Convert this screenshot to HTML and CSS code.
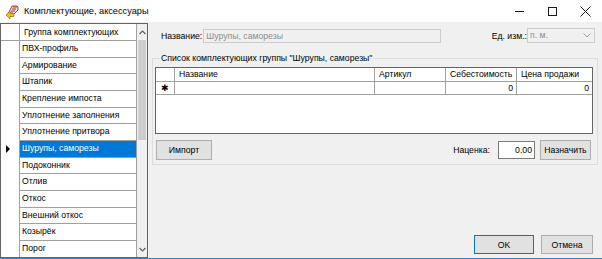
FILE: index.html
```html
<!DOCTYPE html>
<html lang="ru">
<head>
    <meta charset="UTF-8">
    <title>Комплектующие, аксессуары</title>
    <link rel="stylesheet" href="styles.css">
</head>
<body>
<div class="window">
    <div class="titlebar">
        <svg class="app-icon" width="14" height="14" viewBox="0 0 14 14">
            <path d="M7 1 L12 1 L13 2 L13 5 L6 12 L3 9 Z" fill="#e8e8e8" stroke="#7a1a1a" stroke-width="0.8"/>
            <path d="M8 2 L12 2 M7 4 L11 4 M6 6 L10 6 M5 8 L8 8" stroke="#d32020" stroke-width="1.2"/>
            <path d="M1 10 L5 6 L5 8.5 L9 8.5 L9 11.5 L5 11.5 L5 14 Z" fill="#f2c21a" stroke="#8a6a00" stroke-width="0.6"/>
        </svg>
        <span class="caption">Комплектующие, аксессуары</span>
        <div class="controls">
            <span class="ctl"><span class="ctl-min"></span></span>
            <span class="ctl"><span class="ctl-max"></span></span>
            <span class="ctl">
                <svg width="11" height="11" viewBox="0 0 11 11"><path d="M0.5 0.5 L10.5 10.5 M10.5 0.5 L0.5 10.5" stroke="#1a1a1a" stroke-width="1"/></svg>
            </span>
        </div>
    </div>

    <div class="client">
        <!-- группы комплектующих -->
        <div class="groups">
            <div class="groups-table">
                <div class="g-head"><span class="rh"></span><span class="g-cell">Группа комплектующих</span></div>
                <div class="g-row"><span class="rh"></span><span class="g-cell">ПВХ-профиль</span></div>
                <div class="g-row"><span class="rh"></span><span class="g-cell">Армирование</span></div>
                <div class="g-row"><span class="rh"></span><span class="g-cell">Штапик</span></div>
                <div class="g-row"><span class="rh"></span><span class="g-cell">Крепление импоста</span></div>
                <div class="g-row"><span class="rh"></span><span class="g-cell">Уплотнение заполнения</span></div>
                <div class="g-row"><span class="rh"></span><span class="g-cell">Уплотнение притвора</span></div>
                <div class="g-row current"><span class="rh"><i class="arrow"></i></span><span class="g-cell">Шурупы, саморезы</span></div>
                <div class="g-row"><span class="rh"></span><span class="g-cell">Подоконник</span></div>
                <div class="g-row"><span class="rh"></span><span class="g-cell">Отлив</span></div>
                <div class="g-row"><span class="rh"></span><span class="g-cell">Откос</span></div>
                <div class="g-row"><span class="rh"></span><span class="g-cell">Внешний откос</span></div>
                <div class="g-row"><span class="rh"></span><span class="g-cell">Козырёк</span></div>
                <div class="g-row"><span class="rh"></span><span class="g-cell">Порог</span></div>
            </div>
            <div class="vscroll">
                <span class="sb-btn">
                    <svg width="7" height="5" viewBox="0 0 7 5"><path d="M0.5 4 L3.5 1 L6.5 4" fill="none" stroke="#606060" stroke-width="1.2"/></svg>
                </span>
                <span class="sb-thumb"></span>
                <span class="sb-track"></span>
                <span class="sb-btn">
                    <svg width="7" height="5" viewBox="0 0 7 5"><path d="M0.5 1 L3.5 4 L6.5 1" fill="none" stroke="#606060" stroke-width="1.2"/></svg>
                </span>
            </div>
        </div>

        <!-- редактор группы -->
        <div class="editor">
            <div class="props">
                <label class="lbl">Название:</label>
                <span class="textbox disabled name-box">Шурупы, саморезы</span>
                <span class="spacer"></span>
                <label class="lbl">Ед. изм.:</label>
                <span class="combo disabled">п. м.
                    <svg class="combo-arrow" width="8" height="5" viewBox="0 0 8 5"><path d="M0.5 0.5 L4 4 L7.5 0.5" fill="none" stroke="#a0a0a0" stroke-width="1"/></svg>
                </span>
            </div>

            <fieldset class="items">
                <legend>Список комплектующих группы "Шурупы, саморезы"</legend>
                <div class="items-grid">
                    <div class="ig-row ig-head">
                        <span class="ig-rh"></span>
                        <span class="ig-cell">Название</span>
                        <span class="ig-cell">Артикул</span>
                        <span class="ig-cell">Себестоимость</span>
                        <span class="ig-cell">Цена продажи</span>
                    </div>
                    <div class="ig-row">
                        <span class="ig-rh">✱</span>
                        <span class="ig-cell"></span>
                        <span class="ig-cell"></span>
                        <span class="ig-cell num">0</span>
                        <span class="ig-cell num">0</span>
                    </div>
                </div>
                <div class="items-tools">
                    <button class="btn btn-import">Импорт</button>
                    <span class="spacer"></span>
                    <label class="lbl">Наценка:</label>
                    <span class="textbox markup-box">0.00</span>
                    <button class="btn btn-assign">Назначить</button>
                </div>
            </fieldset>

            <div class="dialog-buttons">
                <button class="btn btn-ok">OK</button>
                <button class="btn btn-cancel">Отмена</button>
            </div>
        </div>
    </div>
</div>
</body>
</html>
```

FILE: styles.css
```css
* {
    margin: 0;
    padding: 0;
    box-sizing: border-box;
}

body {
    width: 602px;
    height: 259px;
    overflow: hidden;
    background: #ffffff;
    font-family: "Liberation Sans", Arial, sans-serif;
    font-size: 8.7px;
    color: #000000;
}

.window {
    width: 602px;
    height: 259px;
    background: #f0f0f0;
    border-bottom: 1px solid #2b88d8;
}

/* заголовок окна */
.titlebar {
    height: 22px;
    background: #ffffff;
    display: flex;
    align-items: center;
}

.app-icon {
    margin-left: 5px;
    margin-top: 1px;
}

.caption {
    margin-left: 5px;
    font-size: 9.2px;
    color: #000000;
}

.controls {
    margin-left: auto;
    display: flex;
    height: 22px;
}

.ctl {
    width: 33px;
    height: 22px;
    display: flex;
    align-items: center;
    justify-content: center;
}

.ctl-min {
    width: 9px;
    height: 1px;
    background: #1a1a1a;
}

.ctl-max {
    width: 9px;
    height: 9px;
    border: 1px solid #1a1a1a;
}

/* рабочая область */
.client {
    display: flex;
    height: 236px;
}

.groups {
    width: 148px;
    height: 235px;
    margin-top: 1px;
    border: 1px solid #646464;
    display: flex;
    background: #ffffff;
    overflow: hidden;
}

.groups-table {
    width: 136px;
    border-right: 1px solid #a0a0a0;
    flex: none;
    display: flex;
    flex-direction: column;
}

.groups-table .rh {
    width: 19px;
    flex: none;
    border-right: 1px solid #a0a0a0;
    display: flex;
    align-items: center;
    justify-content: center;
}

.g-head {
    height: 17px;
    display: flex;
    border-bottom: 1px solid #a0a0a0;
    flex: none;
}

.g-head .g-cell {
    flex: 1;
    padding-left: 4px;
    line-height: 16px;
    white-space: nowrap;
}

.g-row {
    height: 16.67px;
    display: flex;
    flex: none;
}

.g-row .g-cell {
    flex: 1;
    padding-left: 2px;
    line-height: 15.67px;
    border-bottom: 1px solid #a0a0a0;
    white-space: nowrap;
    overflow: hidden;
}

.g-row.current .g-cell {
    background: #0078d7;
    color: #ffffff;
}

.arrow {
    width: 0;
    height: 0;
    border-top: 4px solid transparent;
    border-bottom: 4px solid transparent;
    border-left: 4px solid #000000;
    margin-left: -4px;
}

.vscroll {
    flex: 1;
    display: flex;
    flex-direction: column;
    background: #f0f0f0;
}

.sb-btn {
    height: 16px;
    flex: none;
    display: flex;
    align-items: center;
    justify-content: center;
}

.sb-thumb {
    height: 100px;
    margin: 0 1px;
    background: #cdcdcd;
}

.sb-track {
    flex: 1;
}

/* редактор */
.editor {
    flex: 1;
    display: flex;
    flex-direction: column;
    padding: 0 4px 0 4px;
}

.props {
    height: 15px;
    margin-top: 6px;
    display: flex;
    align-items: center;
    padding-left: 9px;
    padding-right: 3px;
}

.lbl {
    white-space: nowrap;
}

.spacer {
    flex: 1;
}

.textbox {
    height: 14px;
    line-height: 12px;
    border: 1px solid #7a7a7a;
    background: #ffffff;
    padding: 0 2px;
}

.textbox.disabled,
.combo.disabled {
    background: #f0f0f0;
    border-color: #cccccc;
    color: #8d8d8d;
}

.name-box {
    width: 238px;
    margin-left: 1px;
}

.combo {
    width: 68px;
    height: 15px;
    line-height: 13px;
    border: 1px solid #cccccc;
    padding-left: 2px;
    display: flex;
    align-items: center;
}

.combo-arrow {
    margin-left: auto;
    margin-right: 3px;
}

/* группа со списком */
.items {
    margin-top: 9px;
    border: 1px solid #dcdcdc;
    padding: 3px 4px 4px 2px;
}

.items legend {
    margin-left: 5px;
    padding: 0 1px;
    line-height: 12px;
}

.items-grid {
    height: 67px;
    border: 1px solid #646464;
    background: #ffffff;
}

.ig-row {
    display: grid;
    grid-template-columns: 19px 200px 71px 71px 1fr;
    height: 13px;
    border-bottom: 1px solid #a0a0a0;
}

.ig-head {
    height: 14px;
}

.ig-rh,
.ig-cell {
    border-right: 1px solid #a0a0a0;
    line-height: 12px;
    padding: 0 4px;
    white-space: nowrap;
    overflow: hidden;
}

.ig-row .ig-cell:last-child {
    border-right: none;
}

.ig-rh {
    padding: 0;
    text-align: center;
    font-size: 9px;
}

.ig-cell.num {
    text-align: right;
    padding-right: 3px;
}

.items-tools {
    display: flex;
    align-items: center;
    margin-top: 6px;
    height: 20px;
}

.btn {
    height: 20px;
    border: 1px solid #adadad;
    background: #e1e1e1;
    font-family: "Liberation Sans", Arial, sans-serif;
    font-size: 8.7px;
    color: #000000;
}

.btn-import {
    width: 56px;
    margin-left: 1px;
}

.markup-box {
    width: 37px;
    height: 18px;
    line-height: 16px;
    margin-left: 8px;
    text-align: right;
}

.btn-assign {
    width: 51px;
    margin-left: 5px;
    margin-right: 2px;
}

.dialog-buttons {
    margin-top: auto;
    margin-bottom: 4px;
    display: flex;
    justify-content: flex-end;
    gap: 7px;
    padding-right: 5px;
}

.btn-ok,
.btn-cancel {
    width: 60px;
    height: 19px;
}

.btn-ok {
    border: 1px solid #0078d7;
}

.btn-cancel {
    width: 52px;
}
```
